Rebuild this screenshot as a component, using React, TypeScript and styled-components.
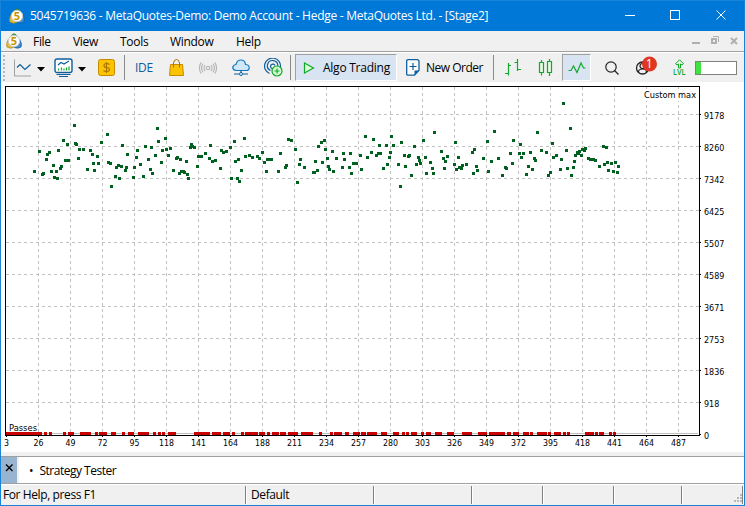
import React from 'react';
import styled, { createGlobalStyle } from 'styled-components';

const Global = createGlobalStyle`
  body { margin: 0; background: #fff; }
`;

const Shell = styled.div`
  box-sizing: border-box;
  width: 745px;
  height: 506px;
  overflow: hidden;
  display: flex;
  flex-direction: column;
  border: 1px solid #1883d7;
  border-top: 0;
  background: #f0f0f0;
  color: #000;
  font: 12px 'Open Sans', 'Noto Sans', sans-serif;
  white-space: pre;
`;

const Label = styled.span<{ $ls?: number; $ml?: number; $color?: string }>`
  letter-spacing: ${p => p.$ls ?? 0}px;
  margin-left: ${p => p.$ml ?? 0}px;
  color: ${p => p.$color ?? 'inherit'};
`;

const TitleBar = styled.header`
  box-sizing: border-box;
  height: 31px;
  flex: none;
  display: flex;
  align-items: center;
  padding-left: 8px;
  border-top: 1px solid #1883d7;
  background: #0078d7;
  color: #fff;
`;

const TitleText = styled(Label)`
  padding-bottom: 1px;
`;

const WindowButtons = styled.div<{ $mr?: number }>`
  margin-left: auto;
  margin-right: ${p => p.$mr ?? 0}px;
  display: flex;
  align-items: center;
`;

const MenuBar = styled.nav`
  box-sizing: border-box;
  height: 21px;
  flex: none;
  display: flex;
  align-items: center;
  padding-left: 5px;
  border-bottom: 1px solid #a0a0a0;
`;

const MenuItem = styled.span<{ $w: number; $ml?: number }>`
  width: ${p => p.$w}px;
  margin-left: ${p => p.$ml ?? 0}px;
  flex: none;
  letter-spacing: -0.3px;
`;

const Toolbar = styled.div`
  box-sizing: border-box;
  height: 30px;
  flex: none;
  display: flex;
  align-items: center;
  border-top: 1px solid #fff;
`;

const Slot = styled.div<{ $w: number; $pad?: number }>`
  box-sizing: border-box;
  width: ${p => p.$w}px;
  padding-left: ${p => p.$pad ?? 0}px;
  flex: none;
  display: flex;
  align-items: center;
`;

const Divider = styled.i<{ $m: number }>`
  width: 1px;
  height: 25px;
  flex: none;
  background: #8a8a8a;
  margin-right: ${p => p.$m}px;
`;

const Pressed = styled.div<{ $w: number; $pad?: number }>`
  box-sizing: border-box;
  width: ${p => p.$w}px;
  height: 27px;
  padding-left: ${p => p.$pad ?? 0}px;
  flex: none;
  display: flex;
  align-items: center;
  background: #d8e4f1;
  border: 1px solid #fff;
  border-top-color: #a0a0a0;
  border-left-color: #a0a0a0;
`;

const Meter = styled.div`
  box-sizing: border-box;
  width: 42px;
  height: 14px;
  margin-top: 1px;
  border: 1px solid #808080;
  background: linear-gradient(90deg, #41e141 5px, #fff 5px);
`;

const ChartArea = styled.main`
  height: 370px;
  flex: none;
  background: #fff;
`;

const Gap = styled.div`
  height: 4px;
  flex: none;
`;

const Dock = styled.div`
  box-sizing: border-box;
  height: 28px;
  flex: none;
  display: flex;
  border-top: 1px solid #a0a0a0;
  border-bottom: 1px solid #a0a0a0;
  background: #fff;
  align-items: center;
`;

const DockClose = styled.div`
  width: 16px;
  height: 26px;
  background: #99b4d1;
  border-right: 2px solid #f0f0f0;
`;

const Status = styled.footer`
  flex: 1;
  display: flex;
  align-items: center;
  border-top: 1px solid #fff;
  position: relative;
`;

const StatusCell = styled.div<{ $w: number; $pad?: number }>`
  box-sizing: border-box;
  width: ${p => p.$w}px;
  height: 18px;
  line-height: 18px;
  flex: none;
  padding-left: ${p => p.$pad ?? 0}px;
  border-right: 1px solid #808080;
  box-shadow: 1px 0 #fff;
`;

const Grip = styled.svg`
  position: absolute;
  right: 1px;
  bottom: 2px;
`;

const ArrowSvg = styled.svg`
  margin-top: 3px;
`;

const Logo = () => (
  <svg width="16" height="16" viewBox="0 0 16 16">
    <path d="M4.5 4 Q8-2.500 11.500 4Z" fill="#4aa14a" stroke="#2a7c36" strokeWidth=".8" />
    <path d="M2.500 6 Q-.5 11 1 14 Q4 16 7.500 14.500Z" fill="#e2bd43" stroke="#a98a20" strokeWidth=".8" />
    <path d="M13.500 6 Q16.500 11 15 14 Q12 16 8.500 14.500Z" fill="#3c90dd" stroke="#175a9c" strokeWidth=".8" />
    <circle cx="8" cy="8" r="5.700" fill="#fff" stroke="#c9c9b8" />
    <text x="8" y="12" textAnchor="middle" fontFamily="Open Sans" fontWeight="700" fontSize="11" fill="#c89100">5</text>
  </svg>
);
const Arrow = () => <ArrowSvg width="8" height="5"><path d="M0 0h8l-4 4.5z" fill="#000" /></ArrowSvg>;

const s = { fill: 'none', stroke: '#0f5e9c', strokeWidth: 1.2 };
const g = { fill: 'none', stroke: '#10a92b', strokeWidth: 1.2 };

const LineChartIcon = () => (
  <svg width="18" height="18"><path d="M.5 .5v16.500H17" fill="none" stroke="#a0a0a0" /><path d="M3 8.500l3-3 5 5 5.500-5" {...s} /></svg>
);
const IndicatorIcon = () => (
  <svg width="20" height="20">
    <rect x="1" y="1" width="17" height="13.500" rx="2" fill="#fff" stroke="#0f5e9c" strokeWidth="1.400" />
    <path d="M2.500 16.500h14M5 18.500h9" {...s} />
    <path d="M4 7l3-2.500 3 1.500 5-3" {...s} />
    <path d="M4.500 12.500v-2M7.500 12.500v-3M10 12.500v-2M12.500 12.500v-3M15 12.500v-4" {...g} />
  </svg>
);
const DollarIcon = () => (
  <svg width="17" height="17">
    <rect x=".5" y=".5" width="16" height="16" rx="2" fill="#fcc300" stroke="#c58a00" />
    <path d="M11.500 5.500q-1-1-3-1-2.500 0-2.500 2t2.500 2q3 .1 3 2t-3 2q-2 0-3-1M8.500 3v11" fill="none" stroke="#a87200" strokeWidth="1.100" />
  </svg>
);
const BagIcon = () => (
  <svg width="15" height="17"><path d="M1.500 5.500h12l1 11H.5z" fill="#fcc300" stroke="#c58a00" /><path d="M4.500 8.500V4q.5-3.500 3-3.500t3 3.500v4.500" fill="none" stroke="#a87200" /></svg>
);
const SignalIcon = () => (
  <svg width="18" height="14" fill="none" stroke="#b2b2b2" strokeWidth="1.100">
    <circle cx="9" cy="7" r="1.700" /><path d="M6 4q-2 3 0 6M12 4q2 3 0 6M4 2.500q-2.800 4.500 0 9M14 2.500q2.800 4.500 0 9M2 1.500q-3 5.500 0 11M16 1.500q3 5.500 0 11" />
  </svg>
);
const CloudIcon = () => (
  <svg width="18" height="17">
    <path d="M4 11.500Q.8 11 .8 8.500T4 5.500Q5 1 9 1t4.500 4.500Q17 5.500 17.200 8.500T14 11.500z" fill="#cfe8fb" stroke="#1679bd" strokeWidth="1.200" />
    <path d="M9 11v3M2 15h5M11 15h5" {...s} /><circle cx="9" cy="15" r="1.500" fill="#fff" stroke="#0f5e9c" />
  </svg>
);
const RadarIcon = () => (
  <svg width="19" height="19">
    <path d="M5.500 15.500A8 8 0 1 1 16.500 9M6.500 12.500A5.200 5.200 0 1 1 13.800 8M8 10.500A2.300 2.300 0 1 1 11 7.500" {...s} />
    <circle cx="13" cy="13" r="5" fill="#d9fbd5" stroke="#10a92b" strokeWidth="1.200" /><path d="M10.500 13h5M13 10.500v5" {...g} />
  </svg>
);
const OrderIcon = () => (
  <svg width="14" height="17">
    <path d="M2 .7h9q2 0 2 2v8.500l-4.500 5H2q-1.300 0-1.300-1.300V2Q.7.7 2 .7z" fill="#fff" stroke="#0f5e9c" strokeWidth="1.300" />
    <path d="M8.500 16v-4.500H13z" fill="#0f5e9c" /><path d="M3.500 7.500h7M7 4v7" {...s} />
  </svg>
);
const BarsIcon = () => <svg width="18" height="17"><path d="M4.500 4v12.500M1 14.500h3.500M4.500 6.500H7M13.500 0v12M10.500 3.500h3M13.500 10.500H17" {...g} /></svg>;
const CandlesIcon = () => <svg width="15" height="17"><path d="M3.500 1v2M3.500 14v2.500M11.500 0v2M11.500 14v3" {...g} /><path d="M1.500 3.500h4v10h-4zM9.500 2.500h4v11h-4z" fill="#e6fae3" stroke="#10a92b" strokeWidth="1.200" /></svg>;
const WaveIcon = () => <svg width="18" height="13"><path d="M.5 9.500h2.500l2.500-4.500 3.500 6.500 4-9.500 2.500 5h2" {...g} /></svg>;
const SearchIcon = () => <svg width="14" height="14"><circle cx="6" cy="6" r="5.200" fill="none" stroke="#222" strokeWidth="1.200" /><path d="M9.500 9.500l4 4" stroke="#222" strokeWidth="1.300" /></svg>;
const AccountIcon = () => (
  <svg width="23" height="24">
    <circle cx="7.500" cy="12" r="6" fill="none" stroke="#222" strokeWidth="1.300" />
    <circle cx="7.500" cy="10" r="2.500" fill="none" stroke="#222" strokeWidth="1.200" /><path d="M3.500 16q0-3 4-3t4 3" fill="none" stroke="#222" strokeWidth="1.200" />
    <circle cx="14.500" cy="8" r="7.500" fill="#de3822" />
    <text x="14.300" y="12.300" textAnchor="middle" fontFamily="Open Sans" fontSize="12" fill="#fff">1</text>
  </svg>
);
const LevelIcon = () => (
  <svg width="14" height="17">
    <path d="M7.500 .8l4 4-1.500 1.200-1.500-1V9h-2V5L5 6 3.500 4.800z" fill="#e6fae3" stroke="#10a92b" />
    <text x="1" y="16" textLength="12.500" lengthAdjust="spacingAndGlyphs" fontFamily="Open Sans" fontWeight="600" fontSize="8" fill="#10a92b">LVL</text>
  </svg>
);

/* Pass results, as [column, row] of each marker's centre. */
const POINTS = (
  '34,171 39,151 42,174 43,173 46,159 47,154 49,152 51,171 53,165 54,177 56,171 57,178 58,150 60,168 61,166 63,140 65,160 67,144 68,160 74,125 75,143 76,144 78,158 79,149 83,149 87,169 90,150 92,154 93,163 94,170 97,156 98,163 101,142 107,134 108,162 110,163 111,186 115,176 116,167 118,165 119,178 121,166 122,145 125,170 126,167 127,154 133,177 134,167 136,157 137,150 140,164 143,176 145,146 148,159 150,169 151,147 152,173 155,155 157,128 158,141 ' +
  '161,162 162,150 165,138 166,149 168,155 170,148 173,170 176,158 177,157 179,173 180,159 181,171 183,171 184,172 186,161 187,174 188,178 190,147 191,144 192,146 194,147 197,166 198,156 201,156 205,153 209,158 210,145 212,161 215,160 220,168 221,150 223,152 226,151 230,147 231,178 234,141 235,161 237,178 238,159 239,181 241,170 244,138 245,156 249,155 252,157 257,156 259,158 262,152 264,162 266,171 267,159 269,159 271,159 278,171 280,153 285,167 286,165 288,139 291,140 295,149 297,182 299,164 300,159 304,167 ' +
  '313,172 314,172 315,161 317,170 318,146 321,142 322,162 324,140 325,149 327,158 328,166 329,169 332,151 333,171 336,158 342,167 343,153 344,159 349,167 350,153 351,173 353,163 356,163 360,155 361,169 365,136 367,157 371,152 373,139 376,155 378,153 379,145 380,153 383,168 386,145 387,164 389,157 390,152 391,136 393,145 398,164 400,186 401,142 404,155 405,166 408,156 409,155 411,175 414,146 416,164 418,157 419,160 420,163 423,140 425,157 426,173 430,162 432,168 433,173 434,132 441,151 443,158 444,168 445,161 447,156 ' +
  '454,164 455,142 456,169 458,157 459,167 461,168 462,165 466,164 472,152 473,173 474,149 476,166 477,170 483,158 487,141 488,171 491,161 494,131 498,158 502,175 505,167 506,168 510,153 512,163 513,140 519,153 520,144 521,157 523,153 526,174 528,166 530,152 532,169 534,158 535,160 537,132 541,150 546,152 548,175 550,172 552,143 553,157 556,155 560,169 561,159 563,103 566,150 567,168 570,128 571,175 573,167 574,161 575,155 577,152 578,153 579,151 581,155 582,149 584,150 585,148 588,158 590,159 592,159 593,159 595,160 599,166 603,146 604,164 606,147 607,162 608,170 611,163 613,171 615,162 617,172 618,166'
).split(' ').map(p => p.split(',').map(Number));

/* Failed passes along the zero line, as start-end columns. */
const FAILED = (
  '6-42 44-47 49-52 63-66 68-74 80-91 95-98 99-107 111-116 122-125 128-134 138-149 153-156 158-161 162-165 168-176 194-210 212-221 223-230 232-235 241-244 245-258 259-265 267-270 272-279 280-286 288-298 301-313 319-322 330-333 334-342 345-349 353-360 361-366 367-377 381-387 393-399 402-405 406-409 411-417 421-424 426-431 435-442 447-454 462-472 478-487 489-505 507-511 513-519 523-529 530-533 537-547 548-551 554-561 563-566 567-570 585-594 595-598 599-604 609-612 613-616'
).split(' ').map(p => p.split('-').map(Number));

const X_TICKS = [3, 26, 49, 72, 95, 118, 141, 164, 188, 211, 234, 257, 280, 303, 326, 349, 372, 395, 418, 441, 464, 487];
const Y_TICKS = [9178, 8260, 7342, 6425, 5507, 4589, 3671, 2753, 1836, 918, 0];

const Chart = () => (
  <svg display="block" width="743" height="370" viewBox="1 82 743 370" shapeRendering="crispEdges" fontFamily="DejaVu Sans Condensed, DejaVu Sans, sans-serif" fontSize="9">
    <g stroke="#c0c0c0">
      {X_TICKS.slice(1).map((_, i) => <path key={i} d={`M${38.5 + i * 32} 87V435`} strokeDasharray="3 3" />)}
      {Y_TICKS.slice(0, 10).map((_, i) => <path key={i} d={`M6 ${114.5 + i * 32}H699`} strokeDasharray="3 3" />)}
      <path d="M6 433.500H698" />
    </g>
    <rect x="643" y="89" width="54" height="12" fill="#fff" />
    <rect x="8" y="421" width="30" height="11" fill="#fff" />
    <text x="644" y="98" textLength="52" lengthAdjust="spacingAndGlyphs">Custom max</text>
    <text x="9" y="431" textLength="28" lengthAdjust="spacingAndGlyphs">Passes</text>
    {POINTS.map(([x, y], i) => <rect key={i} x={x - 1} y={y - 1} width="3" height="3" fill="#006020" />)}
    {FAILED.map(([a, b], i) => <rect key={i} x={a} y="432" width={b - a} height="3" fill="#c80000" />)}
    <rect x="5.500" y="86.500" width="694" height="349" fill="none" stroke="#000" />
    {X_TICKS.map((v, i) => (
      <g key={v}>
        <path d={`M${6.5 + i * 32} 436v1`} stroke="#000" />
        <text x={6.5 + i * 32} y="446" textAnchor="middle" textLength={i === 0 ? 5 : i < 5 ? 10 : 15} lengthAdjust="spacingAndGlyphs">{v}</text>
      </g>
    ))}
    {Y_TICKS.map((v, i) => (
      <g key={v}>
        <path d={`M700 ${114.5 + i * 32}h1`} stroke="#000" />
        <text x="704" y={119 + i * 32} textLength={String(v).length * 5.1} lengthAdjust="spacingAndGlyphs">{v}</text>
      </g>
    ))}
  </svg>
);

export default function App() {
  return (
    <Shell>
      <Global />
      <TitleBar>
        <Logo />
        <TitleText $ml={5} $ls={-0.265}>5045719636 - MetaQuotes-Demo: Demo Account - Hedge - MetaQuotes Ltd. - [Stage2]</TitleText>
        <WindowButtons $mr={4}>
          <svg width="120" height="30" fill="none" stroke="#fff">
            <path d="M5 14.500h10M96.500 9.500l9 9M105.500 9.500l-9 9" /><rect x="50.500" y="9.500" width="9" height="9" />
          </svg>
        </WindowButtons>
      </TitleBar>
      <MenuBar>
        <Logo />
        <MenuItem $w={40} $ml={11}>File</MenuItem>
        <MenuItem $w={47}>View</MenuItem>
        <MenuItem $w={50}>Tools</MenuItem>
        <MenuItem $w={66}>Window</MenuItem>
        <MenuItem $w={40}>Help</MenuItem>
        <WindowButtons>
          <svg width="52" height="16" fill="none" stroke="#b0b0b0" strokeWidth="2">
            <path d="M0 10h8M39 5l6 6M45 5l-6 6" /><rect x="20" y="6" width="4" height="4" /><path d="M21 3.500h5.500V9" strokeWidth="1" />
          </svg>
        </WindowButtons>
      </MenuBar>
      <Toolbar>
        <Slot $w={13}><svg width="6" height="28"><path d="M3 1v27" stroke="#b8b8b8" strokeWidth="2" strokeDasharray="2 2" /></svg></Slot>
        <Slot $w={23}><LineChartIcon /></Slot>
        <Slot $w={17}><Arrow /></Slot>
        <Slot $w={24}><IndicatorIcon /></Slot>
        <Slot $w={20}><Arrow /></Slot>
        <Slot $w={26}><DollarIcon /></Slot>
        <Divider $m={10} />
        <Slot $w={34}><Label $ls={-0.3} $color="#0f5e9c">IDE</Label></Slot>
        <Slot $w={30}><BagIcon /></Slot>
        <Slot $w={33}><SignalIcon /></Slot>
        <Slot $w={32}><CloudIcon /></Slot>
        <Slot $w={26}><RadarIcon /></Slot>
        <Divider $m={4} />
        <Pressed $w={102}>
          <svg width="20" height="14"><path d="M8.500 2v10l9-5z" fill="#d9fbd5" stroke="#10a92b" strokeWidth="1.200" /></svg>
          <Label $ml={7} $ls={-0.25}>Algo Trading</Label>
        </Pressed>
        <Slot $w={96} $pad={9}><OrderIcon /><Label $ml={6} $ls={-0.5}>New Order</Label></Slot>
        <Divider $m={10} />
        <Slot $w={34}><BarsIcon /></Slot>
        <Slot $w={24}><CandlesIcon /></Slot>
        <Pressed $w={29} $pad={5}><WaveIcon /></Pressed>
        <Slot $w={44} $pad={14}><SearchIcon /></Slot>
        <Slot $w={37}><AccountIcon /></Slot>
        <Slot $w={23}><LevelIcon /></Slot>
        <Meter />
      </Toolbar>
      <ChartArea><Chart /></ChartArea>
      <Gap />
      <Dock>
        <DockClose><svg width="16" height="26"><path d="M5 7.500l6.500 6.500M11.500 7.500l-6.500 6.500" stroke="#000" strokeWidth="1.400" /></svg></DockClose>
        <Label $ml={10}>•</Label>
        <Label $ml={6} $ls={-0.5}>Strategy Tester</Label>
      </Dock>
      <Status>
        <StatusCell $w={245} $pad={2}><Label $ls={-0.4}>For Help, press F1</Label></StatusCell>
        <StatusCell $w={128} $pad={5}><Label $ls={-0.4}>Default</Label></StatusCell>
        <StatusCell $w={98} />
        <StatusCell $w={71} />
        <StatusCell $w={71} />
        <StatusCell $w={68} />
        <StatusCell $w={61} />
        <Grip width="9" height="9" fill="#b8b8b8"><path d="M6 0h2v2H6zM3 3h2v2H3zM6 3h2v2H6zM0 6h2v2H0zM3 6h2v2H3zM6 6h2v2H6z" /></Grip>
      </Status>
    </Shell>
  );
}
